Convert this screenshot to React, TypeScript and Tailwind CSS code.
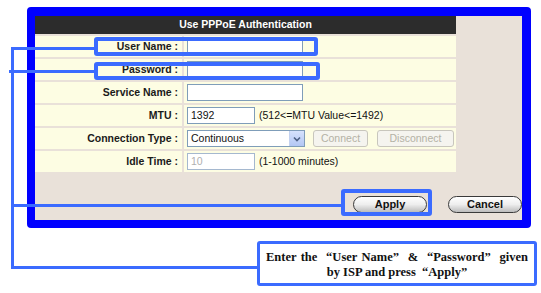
import React from "react";

const rows: { label: string; kind: string }[] = [
  { label: "User Name :", kind: "text" },
  { label: "Password :", kind: "text" },
  { label: "Service Name :", kind: "text" },
  { label: "MTU :", kind: "mtu" },
  { label: "Connection Type :", kind: "conn" },
  { label: "Idle Time :", kind: "idle" },
];

function Value({ kind }: { kind: string }) {
  if (kind === "text") {
    return <div className="w-[116px] h-[17px] bg-white border border-[#7f9db9]" />;
  }
  if (kind === "mtu") {
    return (
      <div className="flex items-center gap-[4px]">
        <div className="w-[68px] h-[17px] bg-white border border-[#7f9db9] pl-[3px] text-[10.5px] leading-[15px] text-[#111]">1392</div>
        <span className="text-[10.5px] text-[#111]">(512&lt;=MTU Value&lt;=1492)</span>
      </div>
    );
  }
  if (kind === "idle") {
    return (
      <div className="flex items-center gap-[4px]">
        <div className="w-[68px] h-[17px] bg-white border border-[#a5b8cf] pl-[3px] text-[10.5px] leading-[15px] text-[#b0b0b0]">10</div>
        <span className="text-[10.5px] text-[#111]">(1-1000 minutes)</span>
      </div>
    );
  }
  return (
    <div className="flex items-center">
      <div className="w-[118px] h-[17px] bg-white border border-[#7f9db9] flex items-center">
        <span className="flex-1 pl-[3px] text-[10.5px] text-[#111]">Continuous</span>
        <div className="w-[15px] h-[15px] bg-linear-to-b from-[#d6e2fc] to-[#b3c7f4] border-l border-[#c4d2f0] flex items-center justify-center">
          <svg width="8" height="6" viewBox="0 0 8 6">
            <path d="M1 1.5 L4 4.5 L7 1.5" stroke="#4d6185" strokeWidth="1.6" fill="none" />
          </svg>
        </div>
      </div>
      <div className="ml-[8px] w-[55px] h-[17px] rounded-[3px] border border-[#c8c6bd] bg-[#f5f4ef] flex items-center justify-center text-[10.5px] text-[#b4b2a5]">Connect</div>
      <div className="ml-[9px] w-[77px] h-[17px] rounded-[3px] border border-[#c8c6bd] bg-[#f5f4ef] flex items-center justify-center text-[10.5px] text-[#b4b2a5]">Disconnect</div>
    </div>
  );
}

function Pill({ text }: { text: string }) {
  return (
    <div className="w-[74px] h-[17px] rounded-full border-[1.5px] border-[#3a3a3a] bg-linear-to-b from-white via-[#eeeeee] to-[#bcbcbc] flex items-center justify-center text-[11px] font-bold text-[#111]">
      {text}
    </div>
  );
}

export default function App() {
  return (
    <div className="relative w-[541px] h-[293px] bg-white overflow-hidden font-['Liberation_Sans',Arial,sans-serif]">
      <div className="pl-[27px] pt-[7px]">
        <div className="w-[504px] h-[221px] border-[#0000ff] border-l-[8px] border-b-[8px] border-t-[9px] border-r-[9px] rounded-[4px] bg-[#e9e1d9] flex flex-col">
          <div className="w-[421px] flex flex-col gap-[2px]">
            <div className="h-[18px] bg-[#2c2c2c] flex items-center justify-center text-white font-bold text-[10.5px]">
              Use PPPoE Authentication
            </div>
            {rows.map((r) => (
              <div key={r.label} className="h-[21px] flex gap-[2px]">
                <div className="w-[147px] bg-[#fdfde3] flex items-center justify-end pr-[4px] text-[10.5px] font-bold text-[#1a1a1a]">
                  {r.label}
                </div>
                <div className="flex-1 bg-[#fdfde3] flex items-center pl-[3px]">
                  <Value kind={r.kind} />
                </div>
              </div>
            ))}
          </div>
          <div className="flex pl-[318px] gap-[21px] mt-[24px]">
            <Pill text="Apply" />
            <Pill text="Cancel" />
          </div>
        </div>
      </div>

      <div className="ml-[257px] mt-[13px] w-[280px] h-[45px] border-[3px] border-[#3b6bff] rounded-[3px] bg-white px-[6px] pt-[6px] font-['Liberation_Serif','Times_New_Roman',serif] font-bold text-[12.5px] leading-[15px] text-[#111]">
        <div className="text-justify [text-align-last:justify]">
          Enter the &nbsp;“User Name” &nbsp;&amp; &nbsp;“Password” &nbsp;given
        </div>
        <div className="text-center">by ISP and press &nbsp;“Apply”</div>
      </div>

      {/* annotation overlays */}
      <div className="absolute left-[94px] top-[37px] w-[224px] h-[19px] border-[4px] border-[#3b6bff] rounded-[3px]" />
      <div className="absolute left-[94px] top-[62px] w-[226px] h-[18px] border-[4px] border-[#3b6bff] rounded-[3px]" />
      <div className="absolute left-[341px] top-[189px] w-[91px] h-[27px] border-[4px] border-[#3b6bff] rounded-[3px]" />
      <div className="absolute left-[11px] top-[47px] w-[3px] h-[222px] bg-[#3b6bff]" />
      <div className="absolute left-[11px] top-[47px] w-[83px] h-[3px] bg-[#3b6bff]" />
      <div className="absolute left-[9px] top-[70px] w-[85px] h-[3px] bg-[#3b6bff]" />
      <div className="absolute left-[11px] top-[204px] w-[330px] h-[3px] bg-[#3b6bff]" />
      <div className="absolute left-[11px] top-[266px] w-[246px] h-[3px] bg-[#3b6bff]" />
    </div>
  );
}
